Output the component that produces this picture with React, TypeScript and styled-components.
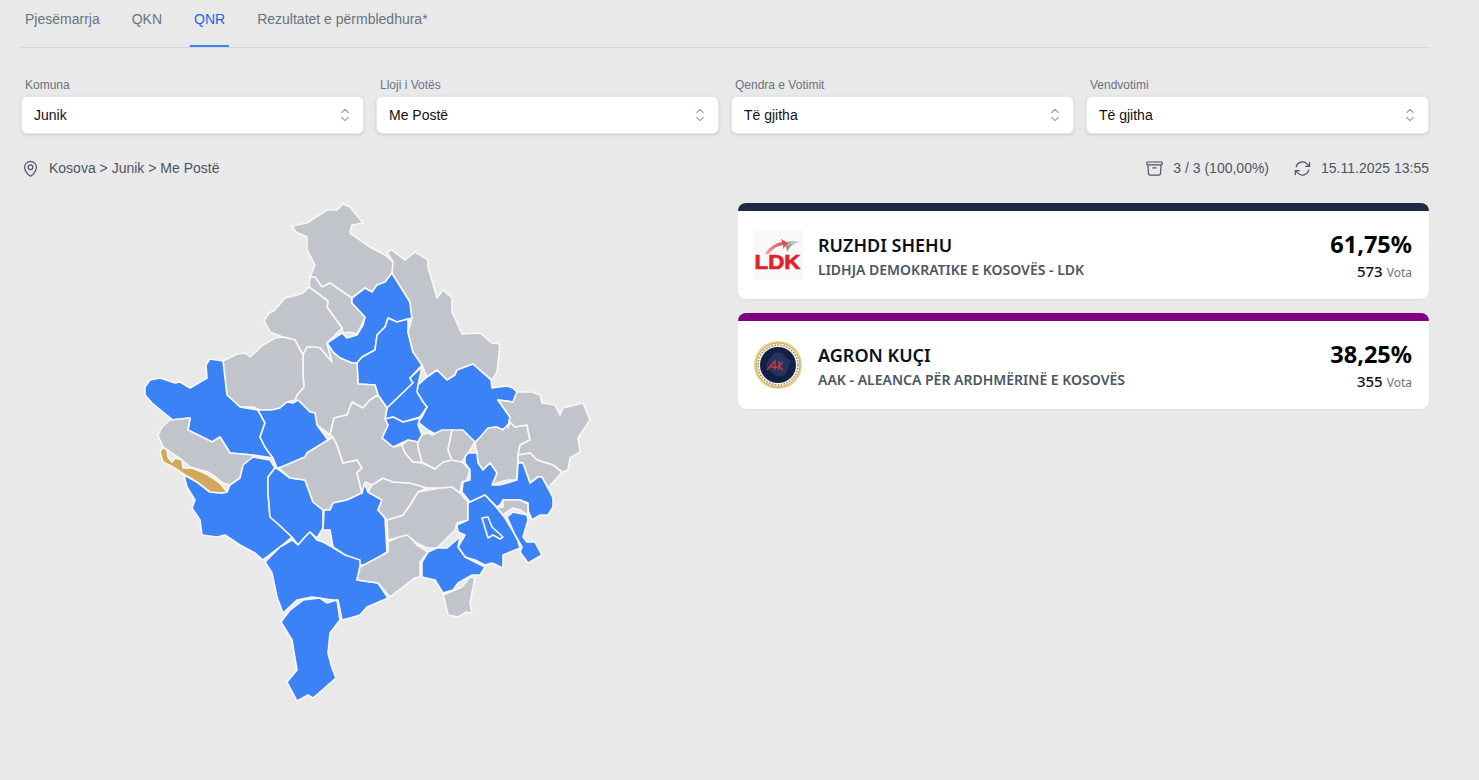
import React from "react";
import styled, { createGlobalStyle } from "styled-components";
import { HiOutlineChevronUpDown, HiOutlineMapPin, HiOutlineArchiveBox, HiOutlineArrowPath } from "react-icons/hi2";

const Global = createGlobalStyle`
  html, body { margin: 0; padding: 0; background: #e9e9e9; font-family: "Liberation Sans", Arial, sans-serif; }
  * { box-sizing: border-box; }
`;
const Page = styled.div`
  width: 1479px; height: 780px; overflow: hidden; padding: 0 50px 0 21px;
`;
const Tabs = styled.nav`
  display: flex; gap: 24px; height: 48px; padding-top: 11px; border-bottom: 1px solid #d1d5db;
`;
const Tab = styled.div<{ $active?: boolean }>`
  padding: 0 4px; height: 36px; font-size: 14px; line-height: 17px;
  color: ${(p) => (p.$active ? "#2563eb" : "#6b7280")};
  border-bottom: 2px solid ${(p) => (p.$active ? "#3b82f6" : "transparent")};
`;
const Filters = styled.div`
  display: grid; grid-template-columns: repeat(4, 1fr); gap: 12px; margin-top: 30px;
`;
const Field = styled.div`display: flex; flex-direction: column;`;
const FieldLabel = styled.label`
  font-size: 12px; line-height: 14px; color: #6b7280; padding-left: 4px; margin-bottom: 4px;
`;
const Select = styled.div`
  height: 38px; background: #fff; border-radius: 6px; border: 1px solid #e5e7eb;
  box-shadow: 0 1px 3px rgba(0,0,0,0.14); display: flex; align-items: center;
  justify-content: space-between; padding: 0 8px 0 12px; font-size: 14px; color: #111;
  svg { color: #9ca3af; }
`;
const Info = styled.div`
  display: flex; justify-content: space-between; align-items: center; height: 20px; margin-top: 24px;
  font-size: 14px; color: #4b5563;
`;
const InfoGroup = styled.div`display: flex; align-items: center;`;
const Crumb = styled.span`margin-left: 9px;`;
const Stat = styled.span`margin-left: 9px;`;
const Spacer = styled.span`width: 24px;`;
const Body = styled.div`
  display: grid; grid-template-columns: 1fr 691px; column-gap: 12px; margin-top: 17px;
`;
const MapSvg = styled.svg`display: block; width: 705px; height: 520px;`;
const Cards = styled.div`display: flex; flex-direction: column; gap: 14px; padding-top: 8px;`;
const Card = styled.div<{ $color: string }>`
  height: 96px; background: #fff; border-radius: 8px; border-top: 8px solid ${(p) => p.$color};
  display: flex; align-items: center; padding: 0 17px 0 15px; box-shadow: 0 1px 2px rgba(0,0,0,0.05);
  font-family: "Noto Sans", sans-serif;
`;
const Logo = styled.svg`width: 50px; height: 50px; flex: none; margin-right: 15px;`;
const Names = styled.div`flex: 1; display: flex; flex-direction: column; gap: 3px; padding-top: 2px;`;
const Name = styled.div`font-size: 18px; line-height: 24px; font-weight: 600; color: #0b0f1a;`;
const Party = styled.div`font-size: 14px; line-height: 19px; font-weight: 600; color: #4b5563;`;
const Right = styled.div`text-align: right; display: flex; flex-direction: column; gap: 3px; padding-top: 1px;`;
const Pct = styled.div`font-size: 23.5px; line-height: 30px; font-weight: 700; color: #000;`;
const Votes = styled.div`font-size: 15px; line-height: 18px; font-weight: 500; color: #111;`;
const VotesLabel = styled.span`font-size: 12px; font-weight: 400; color: #6b7280; margin-left: 4px;`;

const G = "#c1c4cb", B = "#3b82f6", Y = "#d4a85c";
const regions: [string, string][] = [
  [G, "292,226 307,223 327,210 337,210 343,204 350,207 363,223 352,225 350,233 370,247 385,255 393,262 393,272 385,282 377,285 372,292 365,288 352,298 343,292 330,283 322,287 315,277 310,277 315,265 307,250 307,237 296,232"],
  [G, "310,277 309,287 328,301 327,307 342,328 343,333 350,332 357,334 363,322 365,317 352,303 352,298 343,292 330,283 322,287 315,277"],
  [G, "309,287 328,301 327,307 342,328 327,343 332,362 320,348 315,347 307,347 303,355 295,340 283,337 270,332 264,321 269,313 275,310 285,298 297,295 303,293"],
  [B, "327,343 342,333 347,338 357,335 363,325 365,317 352,303 352,298 365,288 372,292 377,285 385,282 392,273 410,302 412,318 408,319 397,322 388,318 385,327 377,335 375,350 362,357 357,363 352,363 340,358 333,352"],
  [B, "388,318 397,322 408,319 408,332 413,352 422,365 410,378 413,383 387,408 378,395 375,385 358,384 357,363 362,357 375,350 377,335 385,327"],
  [G, "387,252 392,250 405,260 415,252 428,260 428,267 437,298 443,290 452,298 452,312 462,334 480,333 492,343 500,344 497,372 492,380 473,364 457,370 455,375 447,380 437,370 427,377 422,365 413,352 408,332 412,318 410,302 392,273 393,262"],
  [B, "418,385 427,377 437,370 447,380 455,375 457,370 473,364 491,380 492,388 507,386 513,388 517,392 513,402 498,400 510,417 508,428 498,430 495,427 492,428 475,442 453,430 437,435 428,430 418,422 422,417 427,407 423,402 417,392"],
  [B, "422,367 410,378 413,383 387,408 385,419 393,417 403,422 420,417 427,407 423,402 417,392 418,385"],
  [B, "385,419 393,417 403,422 420,418 418,425 422,435 418,442 408,440 393,447 382,438 388,425"],
  [G, "307,347 303,355 303,375 304,387 297,395 295,400 300,402 310,412 315,413 317,425 330,435 334,418 347,415 352,402 363,408 370,400 378,395 375,385 358,384 357,363 352,363 340,358 333,352 327,343 332,362 320,348 315,347"],
  [G, "223,361 237,354 245,353 250,357 263,345 275,338 283,337 295,340 303,355 303,375 304,387 297,395 295,400 287,402 280,408 272,410 260,410 253,407 240,407 227,395"],
  [B, "145,387 150,380 160,378 175,383 180,382 190,388 207,378 206,365 210,359 223,361 227,395 240,407 258,410 265,423 260,437 265,447 273,458 253,455 230,453 220,437 212,442 188,430 190,418 173,420 163,412 152,403 145,395"],
  [B, "258,410 272,410 280,408 287,402 293,403 298,400 310,412 315,413 317,425 328,440 307,453 305,457 282,467 277,468 273,458 265,447 260,437 265,423"],
  [G, "170,420 190,418 188,430 212,442 220,437 230,453 253,455 252,462 243,467 240,478 230,485 223,483 215,477 208,472 190,467 182,460 163,447 160,440 158,435 162,427"],
  [B, "184,475 197,482 210,492 222,493 227,492 230,485 240,478 243,465 253,457 270,460 275,468 268,477 268,493 270,517 277,523 292,537 280,547 263,560 255,553 240,545 225,535 217,537 202,535 200,520 192,508 195,500 187,487"],
  [Y, "160,452 163,447 167,450 168,457 172,462 175,458 182,460 183,468 192,468 202,472 208,475 220,483 227,492 222,493 210,492 197,482 182,473 173,467 163,462"],
  [B, "278,469 290,478 305,480 313,502 323,510 323,528 317,538 310,532 305,537 298,545 292,537 277,523 270,517 268,493 268,477 275,468"],
  [G, "279,468 305,457 307,453 328,440 333,437 337,445 343,463 357,460 362,468 357,473 362,493 347,500 333,503 330,510 323,510 313,502 305,480 290,478"],
  [B, "324,510 330,510 333,503 347,500 362,493 360,482 365,485 368,492 382,500 378,510 385,518 387,552 368,565 360,565 345,555 333,547 330,530 323,530"],
  [B, "265,562 280,547 292,540 298,545 305,537 310,532 317,540 323,542 332,547 345,555 360,560 360,567 357,580 378,583 388,598 367,607 360,615 350,618 342,620 338,600 333,600 312,597 297,600 283,613 277,597 272,573"],
  [B, "281,622 290,610 303,600 320,598 327,603 337,600 340,620 330,633 328,653 332,668 336,678 313,698 308,695 297,701 287,682 297,670 292,640"],
  [G, "360,567 388,552 388,542 403,535 408,535 417,545 428,552 420,562 420,577 415,578 390,597 378,583 357,580"],
  [G, "387,520 403,515 410,505 418,492 440,488 452,487 460,493 468,502 468,520 457,523 455,530 437,548 427,548 417,543 407,535 388,540"],
  [G, "372,485 383,478 393,482 410,483 427,488 418,492 410,505 403,515 387,520 378,510 382,500 368,492"],
  [G, "330,435 334,418 347,415 352,402 363,408 370,400 378,395 387,408 385,419 388,425 382,438 393,447 402,445 405,453 413,462 422,463 435,469 443,462 452,460 462,462 470,470 467,480 462,482 460,493 452,487 440,488 427,488 410,483 393,482 383,478 372,485 365,482 362,493 357,473 362,468 357,460 343,463 337,445 333,437"],
  [G, "402,445 408,440 418,442 418,447 422,462 413,462 405,453"],
  [G, "418,447 418,442 422,435 428,433 432,435 442,430 452,430 448,450 452,460 443,462 435,469 422,462"],
  [G, "452,430 463,430 475,442 467,455 462,462 452,460 448,450"],
  [G, "475,443 488,428 497,427 503,430 510,422 515,427 527,425 530,440 520,445 518,455 517,480 507,480 497,483 492,485 497,473 490,463 483,470 478,463 477,453"],
  [G, "517,392 532,392 540,395 542,403 555,405 560,415 563,408 583,403 590,420 578,438 580,452 570,458 568,470 562,472 553,465 537,460 530,453 518,455 520,445 530,440 527,425 515,427 510,422 508,428 510,417 498,400 513,402"],
  [G, "518,455 530,453 537,460 553,465 562,472 555,480 548,488 542,477 538,477 530,483 523,463 518,462"],
  [B, "465,457 468,453 477,453 478,463 483,470 490,463 497,473 492,485 500,485 517,480 518,463 523,463 530,483 538,477 542,477 548,488 553,498 553,507 548,515 540,515 532,520 528,510 528,503 520,500 503,500 500,505 497,507 485,495 470,502 462,492 463,482 470,480 470,470 465,463"],
  [G, "496,508 503,507 503,500 520,500 528,504 528,515 520,510 513,508 503,515"],
  [B, "468,503 485,495 497,508 505,518 517,538 520,548 503,555 503,568 492,563 485,565 475,560 465,557 458,547 465,535 458,532 457,525 468,520"],
  [B, "507,517 513,512 527,515 528,520 523,537 527,542 535,542 542,555 528,563 520,552 522,547 515,535"],
  [B, "422,562 428,552 437,548 447,548 460,537 458,547 465,557 475,562 485,567 480,575 472,575 458,583 453,590 443,593 435,580 422,577"],
  [G, "443,595 455,590 462,587 470,577 475,578 470,603 472,613 466,612 458,617 448,615 445,602"],
  [B, "482,518 488,517 492,527 503,537 500,539 493,535 488,538 485,528"],
];

const LdkLogo = () => (
  <Logo viewBox="0 0 50 50">
    <defs>
      <linearGradient id="ldkRed" x1="0" y1="1" x2="1" y2="0">
        <stop offset="0" stopColor="#f3a3a6" />
        <stop offset="1" stopColor="#e0353b" />
      </linearGradient>
      <linearGradient id="ldkGrey" x1="1" y1="0" x2="0" y2="1">
        <stop offset="0" stopColor="#e2e2e2" />
        <stop offset="1" stopColor="#6f6f6f" />
      </linearGradient>
    </defs>
    <rect width="50" height="50" fill="#f8f8f8" rx="2" />
    <path d="M30 14 C36 10 42 10 47 12 C41 13 37 16 34 22 C34 18 33 16 30 14 Z" fill="url(#ldkGrey)" />
    <path d="M12 24 C16 17 23 13 29 12 L28 9 L35 13 L30 19 L30 15 C24 16 19 19 16 24 Z" fill="url(#ldkRed)" />
    <text x="24.5" y="39" textAnchor="middle" fontFamily="Liberation Sans" fontWeight="700" fontSize="20.5" fill="#e2222a" stroke="#e2222a" strokeWidth="0.7" textLength="46" lengthAdjust="spacingAndGlyphs">LDK</text>
  </Logo>
);
const AakLogo = () => (
  <Logo viewBox="0 0 50 50">
    <circle cx="25" cy="25" r="24" fill="#e8d48f" />
    <circle cx="25" cy="25" r="22" fill="#f4efe0" stroke="#cfa94c" strokeWidth="1" />
    <circle cx="25" cy="25" r="20" fill="none" stroke="#8d8a7a" strokeWidth="1.4" strokeDasharray="1.5 1.5" />
    <circle cx="25" cy="25" r="18" fill="#132044" />
    <path d="M21 13 L29 13 L33 18 L38 21 L35 29 L32 35 L25 37 L18 32 L13 26 L16 19 Z" fill="#24335f" />
    <path d="M14 30 L22 21 L22 30 M18 27 L25 27 M26 21 L26 30 M26 26 L30 22 M26 26 L30 30" stroke="#d23b3b" strokeWidth="1.4" fill="none" />
  </Logo>
);

const filters = [
  ["Komuna", "Junik"],
  ["Lloji i Votës", "Me Postë"],
  ["Qendra e Votimit", "Të gjitha"],
  ["Vendvotimi", "Të gjitha"],
];

export default function App() {
  return (
    <Page>
      <Global />
      <Tabs>
        <Tab>Pjesëmarrja</Tab>
        <Tab>QKN</Tab>
        <Tab $active>QNR</Tab>
        <Tab>Rezultatet e përmbledhura*</Tab>
      </Tabs>
      <Filters>
        {filters.map(([l, v]) => (
          <Field key={l}>
            <FieldLabel>{l}</FieldLabel>
            <Select>
              {v}
              <HiOutlineChevronUpDown size={20} />
            </Select>
          </Field>
        ))}
      </Filters>
      <Info>
        <InfoGroup>
          <HiOutlineMapPin size={19} />
          <Crumb>Kosova &gt; Junik &gt; Me Postë</Crumb>
        </InfoGroup>
        <InfoGroup>
          <HiOutlineArchiveBox size={19} />
          <Stat>3 / 3 (100,00%)</Stat>
          <Spacer />
          <HiOutlineArrowPath size={19} />
          <Stat>15.11.2025 13:55</Stat>
        </InfoGroup>
      </Info>
      <Body>
        <MapSvg viewBox="21 195 705 520">
          {regions.map(([fill, pts], i) => (
            <polygon key={i} points={pts} fill={fill} stroke="#f8f8f8" strokeWidth="1.6" strokeLinejoin="round" />
          ))}
        </MapSvg>
        <Cards>
          <Card $color="#1f2a44">
            <LdkLogo />
            <Names>
              <Name>RUZHDI SHEHU</Name>
              <Party>LIDHJA DEMOKRATIKE E KOSOVËS - LDK</Party>
            </Names>
            <Right>
              <Pct>61,75%</Pct>
              <Votes>573<VotesLabel>Vota</VotesLabel></Votes>
            </Right>
          </Card>
          <Card $color="#800080">
            <AakLogo />
            <Names>
              <Name>AGRON KUÇI</Name>
              <Party>AAK - ALEANCA PËR ARDHMËRINË E KOSOVËS</Party>
            </Names>
            <Right>
              <Pct>38,25%</Pct>
              <Votes>355<VotesLabel>Vota</VotesLabel></Votes>
            </Right>
          </Card>
        </Cards>
      </Body>
    </Page>
  );
}
